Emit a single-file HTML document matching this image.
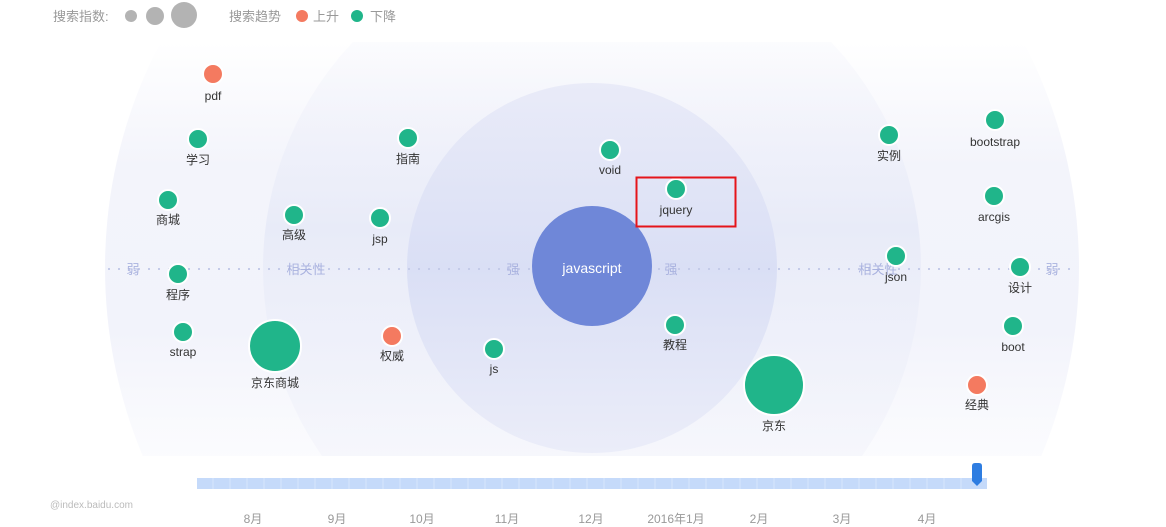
<!DOCTYPE html>
<html><head><meta charset="utf-8"><style>
html,body{margin:0;padding:0;background:#fff;width:1166px;height:527px;overflow:hidden}
#w{width:1166px;height:527px;overflow:hidden;position:relative}
svg{display:block;position:absolute;left:0;top:0}
text{font-family:"Liberation Sans","Noto Sans CJK SC",sans-serif}
</style></head><body><div id="w">
<svg width="1166" height="527" viewBox="0 0 1166 527" xmlns="http://www.w3.org/2000/svg">
<defs>
<linearGradient id="g1" gradientUnits="userSpaceOnUse" x1="0" y1="42" x2="0" y2="456">
<stop offset="0" stop-color="#f3f4fb" stop-opacity="0"/><stop offset="0.3" stop-color="#f3f4fb"/><stop offset="0.7" stop-color="#f2f3fb"/><stop offset="1" stop-color="#f8f9fd" stop-opacity="0.6"/></linearGradient>
<linearGradient id="g2" gradientUnits="userSpaceOnUse" x1="0" y1="42" x2="0" y2="456">
<stop offset="0" stop-color="#f3f4fb" stop-opacity="0.3"/><stop offset="0.45" stop-color="#e8ebf8"/><stop offset="1" stop-color="#f3f4fb" stop-opacity="0.6"/></linearGradient>
<linearGradient id="g3" x1="0" y1="0" x2="0" y2="1">
<stop offset="0" stop-color="#e9ebf8"/><stop offset="0.5" stop-color="#dadff5"/><stop offset="1" stop-color="#ebedf9"/></linearGradient>
<clipPath id="c"><rect x="0" y="42" width="1166" height="414"/></clipPath>
</defs>
<g clip-path="url(#c)">
<circle cx="592" cy="268" r="487" fill="url(#g1)"/>
<circle cx="592" cy="268" r="329" fill="url(#g2)"/>
<circle cx="592" cy="268" r="185" fill="url(#g3)"/>
</g>
<line x1="108" y1="269" x2="1078" y2="269" stroke="#c4cbe9" stroke-width="2" stroke-dasharray="2,8"/>
<g fill="#a9b2df" font-size="13" text-anchor="middle">
<text x="133" y="274">弱</text><text x="306" y="274">相关性</text><text x="513" y="274">强</text>
<text x="671" y="274">强</text><text x="878" y="274">相关性</text><text x="1052" y="274">弱</text>
</g>
<circle cx="592" cy="266" r="60" fill="#6f87d8"/>
<text x="592" y="273" fill="#fff" font-size="14" text-anchor="middle">javascript</text>
<g stroke="#fff" stroke-width="2">
<circle cx="213" cy="74" r="10" fill="#f47a60"/>
<circle cx="198" cy="139" r="10" fill="#20b58a"/>
<circle cx="168" cy="200" r="10" fill="#20b58a"/>
<circle cx="294" cy="215" r="10" fill="#20b58a"/>
<circle cx="178" cy="274" r="10" fill="#20b58a"/>
<circle cx="183" cy="332" r="10" fill="#20b58a"/>
<circle cx="275" cy="346" r="26" fill="#20b58a"/>
<circle cx="408" cy="138" r="10" fill="#20b58a"/>
<circle cx="380" cy="218" r="10" fill="#20b58a"/>
<circle cx="392" cy="336" r="10" fill="#f47a60"/>
<circle cx="494" cy="349" r="10" fill="#20b58a"/>
<circle cx="610" cy="150" r="10" fill="#20b58a"/>
<circle cx="676" cy="189" r="10" fill="#20b58a"/>
<circle cx="675" cy="325" r="10" fill="#20b58a"/>
<circle cx="774" cy="385" r="30" fill="#20b58a"/>
<circle cx="889" cy="135" r="10" fill="#20b58a"/>
<circle cx="896" cy="256" r="10" fill="#20b58a"/>
<circle cx="995" cy="120" r="10" fill="#20b58a"/>
<circle cx="994" cy="196" r="10" fill="#20b58a"/>
<circle cx="1020" cy="267" r="10" fill="#20b58a"/>
<circle cx="1013" cy="326" r="10" fill="#20b58a"/>
<circle cx="977" cy="385" r="10" fill="#f47a60"/>
</g>
<g fill="#333" font-size="12" text-anchor="middle">
<text x="213" y="100">pdf</text><text x="198" y="164">学习</text><text x="168" y="224">商城</text>
<text x="294" y="239">高级</text><text x="178" y="299">程序</text><text x="183" y="356">strap</text>
<text x="275" y="387">京东商城</text><text x="408" y="163">指南</text><text x="380" y="243">jsp</text>
<text x="392" y="360">权威</text><text x="494" y="373">js</text><text x="610" y="174">void</text>
<text x="676" y="214">jquery</text><text x="675" y="349">教程</text><text x="774" y="430">京东</text>
<text x="889" y="160">实例</text><text x="896" y="281">json</text><text x="995" y="146">bootstrap</text>
<text x="994" y="221">arcgis</text><text x="1020" y="292">设计</text><text x="1013" y="351">boot</text>
<text x="977" y="409">经典</text>
</g>
<rect x="636.5" y="177.5" width="99" height="49" fill="none" stroke="#e5141a" stroke-width="2"/>
<g font-size="13" fill="#999">
<text x="53" y="21">搜索指数:</text>
<text x="229" y="21">搜索趋势</text><text x="313" y="21">上升</text><text x="370" y="21">下降</text>
</g>
<circle cx="131" cy="16" r="6" fill="#b3b3b3"/>
<circle cx="155" cy="16" r="9" fill="#b3b3b3"/>
<circle cx="184" cy="15" r="13" fill="#b3b3b3"/>
<circle cx="302" cy="16" r="6" fill="#f47a60"/>
<circle cx="357" cy="16" r="6" fill="#20b58a"/>
<rect x="197" y="478" width="790" height="11" fill="#c5dafa"/>
<g stroke="#d8e6fc" stroke-width="1">
<path d="M213 478v11M230 478v11M247 478v11M264 478v11M281 478v11M298 478v11M315 478v11M332 478v11M349 478v11M366 478v11M383 478v11M400 478v11M417 478v11M434 478v11M451 478v11M468 478v11M485 478v11M502 478v11M519 478v11M536 478v11M553 478v11M570 478v11M587 478v11M604 478v11M621 478v11M638 478v11M655 478v11M672 478v11M689 478v11M706 478v11M723 478v11M740 478v11M757 478v11M774 478v11M791 478v11M808 478v11M825 478v11M842 478v11M859 478v11M876 478v11M893 478v11M910 478v11M927 478v11M944 478v11M961 478v11"/>
</g>
<path d="M972 466q0-3 3-3h4q3 0 3 3v15l-5 5l-5-5z" fill="#2e7de1"/>
<text x="50" y="508" font-size="10" fill="#bbb">@index.baidu.com</text>
<g font-size="12" fill="#999" text-anchor="middle">
<text x="253" y="523">8月</text><text x="337" y="523">9月</text><text x="422" y="523">10月</text>
<text x="507" y="523">11月</text><text x="591" y="523">12月</text><text x="676" y="523">2016年1月</text>
<text x="759" y="523">2月</text><text x="842" y="523">3月</text><text x="927" y="523">4月</text>
</g>
</svg>
</div></body></html>
